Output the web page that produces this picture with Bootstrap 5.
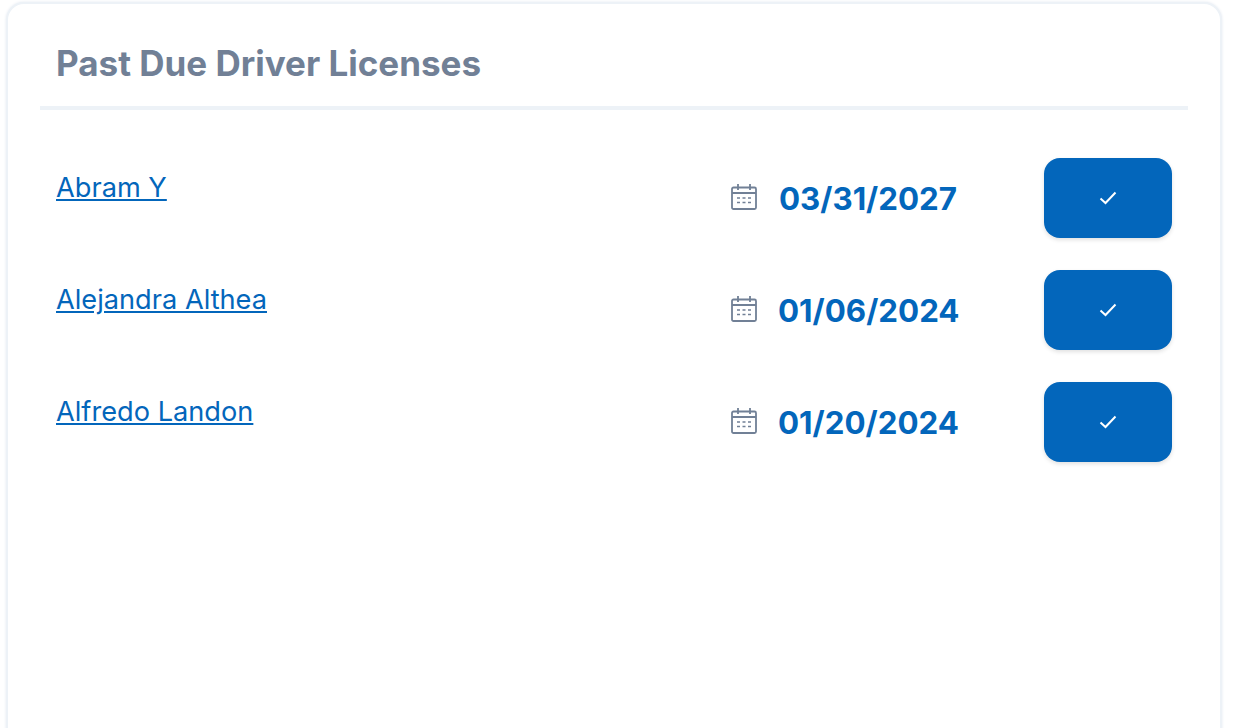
<!DOCTYPE html>
<html lang="en">
<head>
<meta charset="utf-8">
<title>Past Due Driver Licenses</title>
<link href="https://cdn.jsdelivr.net/npm/bootstrap@5.3.0/dist/css/bootstrap.min.css" rel="stylesheet">
<style>
html,body{height:100%;overflow:hidden;background:#fff;font-family:Inter,"Liberation Sans",sans-serif}
.dash-card{margin:2px 14px 0 6px;height:760px;border:2px solid #edf2f7;border-radius:18px;padding:0 32px;box-shadow:0 0 3px #e2e8f0;background:#fff}
.dash-head{height:106px;border-bottom:4px solid #edf2f7;padding:16px 16px 0;margin:0}
.dash-head h2{font-size:35px;line-height:86px;margin:0;font-weight:700;color:#718096}
.dash-list{padding:48px 16px 0}
.dash-row{height:80px;margin-bottom:32px}
.dash-name{font-size:27.2px;line-height:30px;color:#0366bb;margin-top:15px}
.dash-date{font-size:31.3px;font-weight:700;color:#0366bb;line-height:80px;width:180px;text-align:center;margin-top:2px}
.dash-cal{width:26px;height:26px;margin-right:21px;margin-bottom:2px;color:#718096}
.dash-btn{width:128px;height:80px;border-radius:16px;margin-left:86px;background:#0366bb;border:0;box-shadow:0 2px 4px rgba(0,0,0,.12)}
</style>
</head>
<body>
<div class="dash-card">
  <div class="dash-head"><h2>Past Due Driver Licenses</h2></div>
  <div class="dash-list">
    <div class="dash-row d-flex">
      <div class="flex-grow-1"><a class="dash-name d-inline-block" href="#">Abram Y</a></div>
      <div class="d-flex align-items-center">
        <svg class="dash-cal" viewBox="0 0 26 26" fill="none" stroke="currentColor" stroke-width="1.8"><rect x="1" y="3.500" width="24" height="21.500" rx="1.5"/><path d="M1 9h24M7 0v6M19 0v6"/><path stroke-dasharray="3 2.500" stroke-width="1.500" d="M6 14h14M6 18.500h14"/></svg>
        <span class="dash-date">03/31/2027</span>
      </div>
      <button class="btn dash-btn d-flex align-items-center justify-content-center" type="button" aria-label="Done"><svg width="18" height="14" viewBox="0 0 18 14" fill="none" stroke="#fff" stroke-width="2"><path d="M1.500 7.500l5 4.500 10-10.500"/></svg></button>
    </div>
    <div class="dash-row d-flex">
      <div class="flex-grow-1"><a class="dash-name d-inline-block" href="#">Alejandra Althea</a></div>
      <div class="d-flex align-items-center">
        <svg class="dash-cal" viewBox="0 0 26 26" fill="none" stroke="currentColor" stroke-width="1.8"><rect x="1" y="3.500" width="24" height="21.500" rx="1.5"/><path d="M1 9h24M7 0v6M19 0v6"/><path stroke-dasharray="3 2.500" stroke-width="1.500" d="M6 14h14M6 18.500h14"/></svg>
        <span class="dash-date">01/06/2024</span>
      </div>
      <button class="btn dash-btn d-flex align-items-center justify-content-center" type="button" aria-label="Done"><svg width="18" height="14" viewBox="0 0 18 14" fill="none" stroke="#fff" stroke-width="2"><path d="M1.500 7.500l5 4.500 10-10.500"/></svg></button>
    </div>
    <div class="dash-row d-flex">
      <div class="flex-grow-1"><a class="dash-name d-inline-block" href="#">Alfredo Landon</a></div>
      <div class="d-flex align-items-center">
        <svg class="dash-cal" viewBox="0 0 26 26" fill="none" stroke="currentColor" stroke-width="1.8"><rect x="1" y="3.500" width="24" height="21.500" rx="1.5"/><path d="M1 9h24M7 0v6M19 0v6"/><path stroke-dasharray="3 2.500" stroke-width="1.500" d="M6 14h14M6 18.500h14"/></svg>
        <span class="dash-date">01/20/2024</span>
      </div>
      <button class="btn dash-btn d-flex align-items-center justify-content-center" type="button" aria-label="Done"><svg width="18" height="14" viewBox="0 0 18 14" fill="none" stroke="#fff" stroke-width="2"><path d="M1.500 7.500l5 4.500 10-10.500"/></svg></button>
    </div>
  </div>
</div>
</body>
</html>
